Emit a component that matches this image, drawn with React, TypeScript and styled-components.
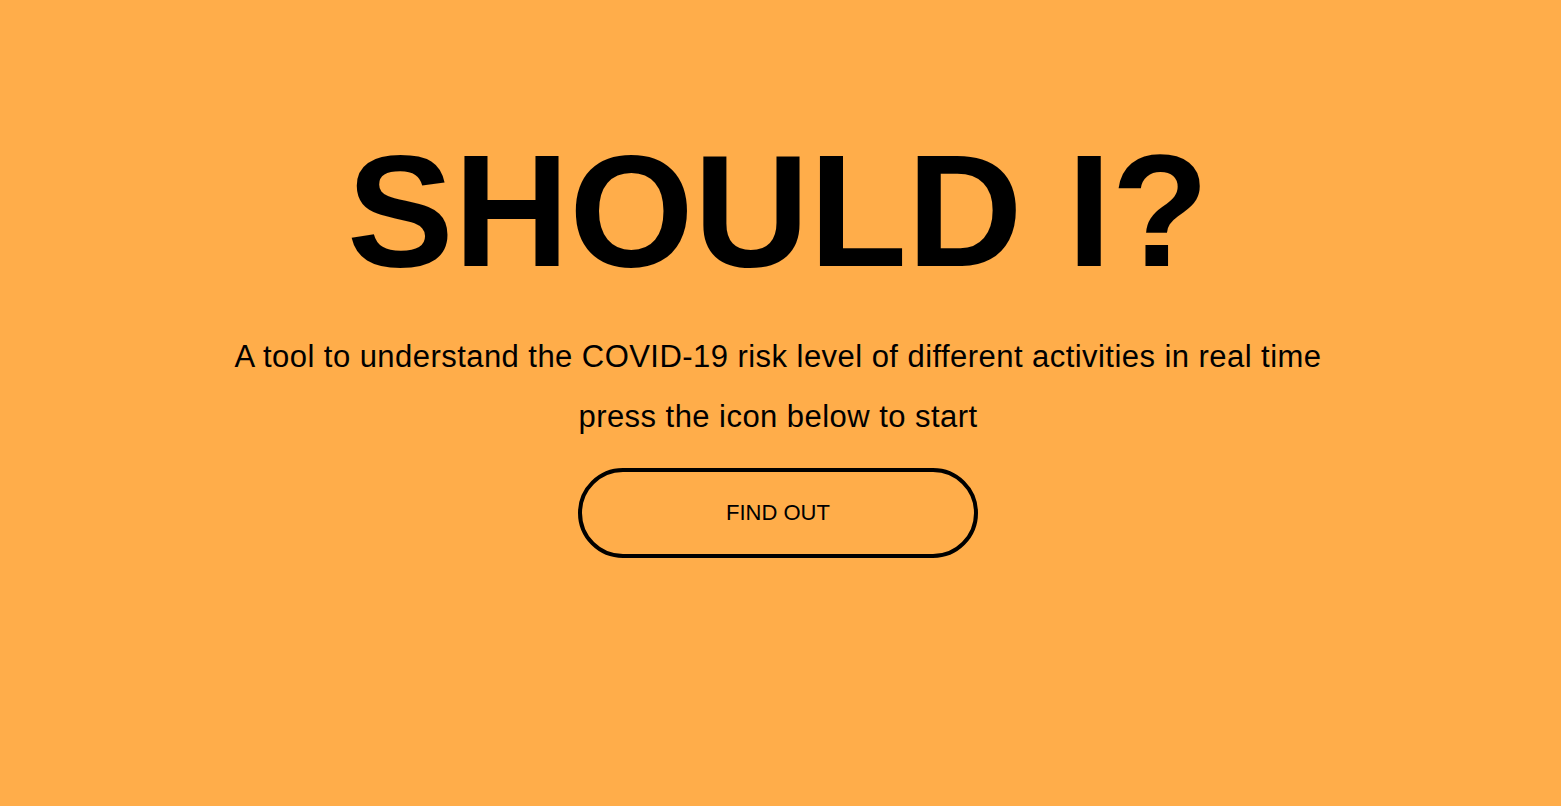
import React from "react";
import styled, { createGlobalStyle } from "styled-components";

const Global = createGlobalStyle`
  html, body { margin: 0; padding: 0; background: #FFAD4A; }
  body { font-family: "Liberation Sans", Arial, Helvetica, sans-serif; color: #000; }
`;

const Page = styled.main`
  min-height: 806px;
  box-sizing: border-box;
  padding: 131px 5px 0 0;
  display: flex;
  flex-direction: column;
  align-items: center;
  background: #FFAD4A;
`;

const Title = styled.h1`
  margin: 0;
  font-size: 160px;
  line-height: 160px;
  font-weight: 700;
  letter-spacing: 0;
`;

const Tagline = styled.p`
  margin: 36px 0 0;
  font-size: 31px;
  line-height: 60px;
  font-weight: 400;
  letter-spacing: 0.45px;
  text-align: center;
`;

const FindOut = styled.button`
  margin-top: 21px;
  width: 400px;
  height: 90px;
  box-sizing: border-box;
  border: 4px solid #000;
  border-radius: 45px;
  background: transparent;
  font-family: "Liberation Sans", Arial, sans-serif;
  font-size: 22px;
  color: #000;
  cursor: pointer;
`;

export default function App() {
  return (
    <>
      <Global />
      <Page>
        <Title>SHOULD I?</Title>
        <Tagline>
          A tool to understand the COVID-19 risk level of different activities in real time
          <br />
          press the icon below to start
        </Tagline>
        <FindOut>FIND OUT</FindOut>
      </Page>
    </>
  );
}
